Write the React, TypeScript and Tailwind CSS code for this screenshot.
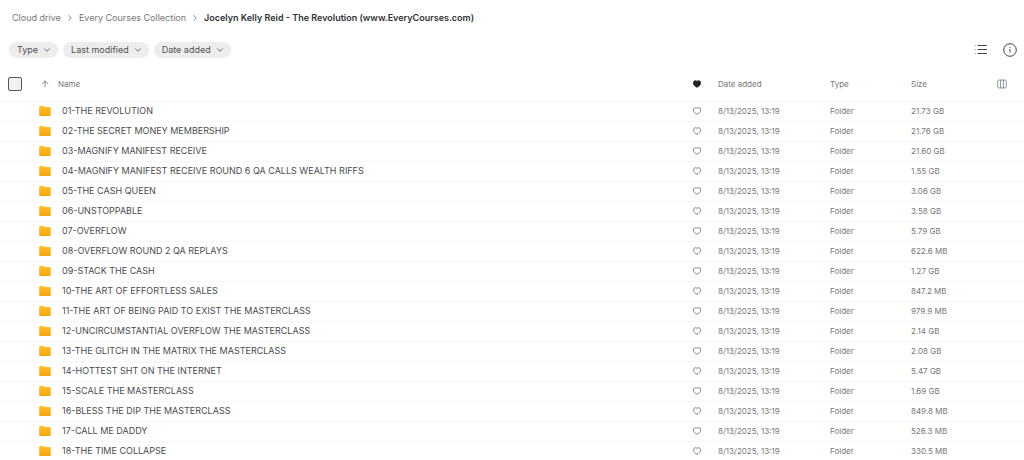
import { ArrowUp, ChevronDown, ChevronRight } from 'lucide-react';

interface FolderItem {
  name: string;
  size: string;
}

const DATE_ADDED = '8/13/2025, 13:19';

const folders: FolderItem[] = [
  { name: '01-THE REVOLUTION', size: '21.73 GB' },
  { name: '02-THE SECRET MONEY MEMBERSHIP', size: '21.76 GB' },
  { name: '03-MAGNIFY MANIFEST RECEIVE', size: '21.60 GB' },
  { name: '04-MAGNIFY MANIFEST RECEIVE ROUND 6 QA CALLS WEALTH RIFFS', size: '1.55 GB' },
  { name: '05-THE CASH QUEEN', size: '3.06 GB' },
  { name: '06-UNSTOPPABLE', size: '3.58 GB' },
  { name: '07-OVERFLOW', size: '5.79 GB' },
  { name: '08-OVERFLOW ROUND 2 QA REPLAYS', size: '622.6 MB' },
  { name: '09-STACK THE CASH', size: '1.27 GB' },
  { name: '10-THE ART OF EFFORTLESS SALES', size: '847.2 MB' },
  { name: '11-THE ART OF BEING PAID TO EXIST THE MASTERCLASS', size: '979.9 MB' },
  { name: '12-UNCIRCUMSTANTIAL OVERFLOW THE MASTERCLASS', size: '2.14 GB' },
  { name: '13-THE GLITCH IN THE MATRIX THE MASTERCLASS', size: '2.08 GB' },
  { name: '14-HOTTEST SHT ON THE INTERNET', size: '5.47 GB' },
  { name: '15-SCALE THE MASTERCLASS', size: '1.69 GB' },
  { name: '16-BLESS THE DIP THE MASTERCLASS', size: '849.8 MB' },
  { name: '17-CALL ME DADDY', size: '526.3 MB' },
  { name: '18-THE TIME COLLAPSE', size: '330.5 MB' },
];

const filters = ['Type', 'Last modified', 'Date added'];

function FolderIcon() {
  return (
    <svg className="block h-3 w-3" viewBox="0 0 12 12" aria-hidden="true">
      <defs>
        <linearGradient id="folder-fill" x1="0" y1="0" x2="0" y2="1">
          <stop offset="0" stopColor="#ffc02b" />
          <stop offset="1" stopColor="#f8a30c" />
        </linearGradient>
      </defs>
      <path
        d="M0.2 2.1C0.2 1.3 0.7 0.9 1.4 0.9H4.2C4.7 0.9 5 1.1 5.3 1.4L6.2 2H10.5C11.3 2 11.7 2.5 11.7 3.2V9.7C11.7 10.5 11.2 11 10.4 11H1.5C0.7 11 0.2 10.5 0.2 9.7Z"
        fill="url(#folder-fill)"
      />
    </svg>
  );
}

function HeartIcon({ filled = false }: { filled?: boolean }) {
  return (
    <svg className="block h-2 w-2" viewBox="0 0 8 8" aria-hidden="true">
      <path
        d="M4 7.2C2.4 6.6 0.4 5.2 0.4 3.1C0.4 1.6 1.2 0.8 2.3 0.8C3 0.8 3.6 1 4 1.4C4.4 1 5 0.8 5.7 0.8C6.8 0.8 7.6 1.6 7.6 3.1C7.6 5.2 5.6 6.6 4 7.2Z"
        fill={filled ? 'currentColor' : 'none'}
        stroke="currentColor"
        strokeWidth="0.9"
        strokeLinejoin="round"
      />
    </svg>
  );
}

function ListIcon() {
  return (
    <svg className="block h-3 w-3" viewBox="0 0 12 12" fill="none" stroke="currentColor" strokeLinecap="round" aria-hidden="true">
      <path d="M3 1.5H11.5M3 5.5H11.5M3 9.5H11.5" strokeWidth="1.1" />
      <path d="M0.6 1.5H0.7M0.6 5.5H0.7M0.6 9.5H0.7" strokeWidth="1" opacity="0.6" />
    </svg>
  );
}

function InfoIcon() {
  return (
    <svg className="block h-3.5 w-3.5" viewBox="0 0 14 14" fill="none" stroke="currentColor" aria-hidden="true">
      <circle cx="7" cy="7" r="6.3" strokeWidth="1" />
      <path d="M6.4 6.4H7.1V9.6" strokeWidth="0.9" />
      <circle cx="7" cy="4.6" r="0.6" fill="currentColor" stroke="none" />
    </svg>
  );
}

function ColumnsIcon() {
  return (
    <svg className="block h-2.5 w-2.5" viewBox="0 0 10 10" fill="none" stroke="currentColor" strokeWidth="0.8" aria-hidden="true">
      <rect x="0.7" y="1" width="8.6" height="8" rx="1.4" />
      <path d="M3.6 1V9M6.4 1V9" />
    </svg>
  );
}

function Breadcrumbs() {
  return (
    <nav aria-label="Breadcrumb" className="flex h-9 items-center gap-1 px-3 text-[9px] leading-3 text-[#777777]">
      <a href="#cloud-drive">Cloud drive</a>
      <ChevronRight className="h-2.5 w-2.5" />
      <a href="#collection">Every Courses Collection</a>
      <ChevronRight className="h-2.5 w-2.5" />
      <span className="font-semibold text-[#303233]" aria-current="page">
        Jocelyn Kelly Reid - The Revolution (www.EveryCourses.com)
      </span>
    </nav>
  );
}

function Toolbar() {
  return (
    <div className="flex h-7 items-center justify-between pr-[7px] pl-[9px]">
      <div className="flex gap-[5px]">
        {filters.map((label) => (
          <button key={label} type="button" className="flex h-4 items-center gap-1 rounded-full bg-[#ededee] pr-1.5 pl-2 text-[9px] leading-3 text-[#505152]">
            {label}
            <ChevronDown className="h-2.5 w-2.5" />
          </button>
        ))}
      </div>
      <div className="flex items-center gap-4 text-[#404142]">
        <button type="button" aria-label="List view">
          <ListIcon />
        </button>
        <button type="button" aria-label="Info">
          <InfoIcon />
        </button>
      </div>
    </div>
  );
}

export default function App() {
  return (
    <main className="min-h-screen bg-white font-['Inter',sans-serif] text-[#777777]">
      <Breadcrumbs />
      <Toolbar />

      <table className="w-full table-fixed border-collapse text-left text-[8px] leading-3">
        <colgroup>
          <col className="w-[39px]" />
          <col className="w-[23px]" />
          <col />
          <col className="w-[25px]" />
          <col className="w-28" />
          <col className="w-[81px]" />
          <col className="w-[86px]" />
          <col className="w-[27px]" />
        </colgroup>
        <thead>
          <tr className="h-[37px] border-b border-[#f7f7f7]">
            <th className="pt-1 pl-2">
              <input
                type="checkbox"
                aria-label="Select all"
                className="block h-3.5 w-3.5 appearance-none rounded-xs border border-[#55565a] bg-[#f1f1f4]"
              />
            </th>
            <th colSpan={2} className="pt-1 font-normal">
              <button type="button" className="flex items-center gap-2 pl-px">
                <ArrowUp className="h-2.5 w-2.5" />
                Name
              </button>
            </th>
            <th className="pt-1 text-[#222324]" aria-label="Favourite">
              <HeartIcon filled />
            </th>
            <th className="pt-1 font-normal">Date added</th>
            <th className="pt-1 font-normal">Type</th>
            <th className="pt-1 font-normal">Size</th>
            <th className="pt-1">
              <button type="button" aria-label="Columns" className="block text-[#6f7a80]">
                <ColumnsIcon />
              </button>
            </th>
          </tr>
        </thead>
        <tbody>
          {folders.map((folder) => (
            <tr key={folder.name} className="h-5 border-b border-[#f7f7f7]">
              <td />
              <td>
                <FolderIcon />
              </td>
              <td className="truncate text-[9px] text-[#4a4b4c]">{folder.name}</td>
              <td>
                <button type="button" aria-label={`Favourite ${folder.name}`} className="block">
                  <HeartIcon />
                </button>
              </td>
              <td>{DATE_ADDED}</td>
              <td>Folder</td>
              <td>{folder.size}</td>
              <td />
            </tr>
          ))}
        </tbody>
      </table>
    </main>
  );
}
